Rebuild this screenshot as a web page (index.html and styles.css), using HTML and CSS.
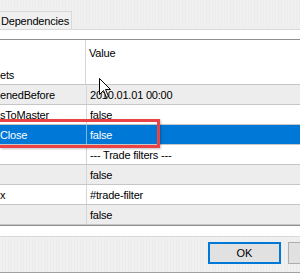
FILE: index.html
```html
<!DOCTYPE html>
<html lang="en">
<head>
    <meta charset="UTF-8">
    <title>Expert Properties</title>
    <link rel="stylesheet" href="styles.css">
</head>
<body>
    <div class="dialog">
        <div class="tabbar">
            <div class="tab">Dependencies</div>
        </div>
        <div class="panel">
            <div class="grid">
                <div class="row header">
                    <div class="name">ets</div>
                    <div class="value">Value</div>
                </div>
                <div class="row alt">
                    <div class="name">enedBefore</div>
                    <div class="value">2010.01.01 00:00</div>
                </div>
                <div class="row">
                    <div class="name">sToMaster</div>
                    <div class="value">false</div>
                </div>
                <div class="row selected">
                    <div class="name">Close</div>
                    <div class="value">false</div>
                </div>
                <div class="row">
                    <div class="name"></div>
                    <div class="value">--- Trade filters ---</div>
                </div>
                <div class="row alt">
                    <div class="name"></div>
                    <div class="value">false</div>
                </div>
                <div class="row">
                    <div class="name">x</div>
                    <div class="value">#trade-filter</div>
                </div>
                <div class="row alt">
                    <div class="name"></div>
                    <div class="value">false</div>
                </div>
            </div>
            <div class="highlight"></div>
            <svg class="cursor" width="13" height="20" viewBox="0 0 13 20">
                <path d="M0.5 0.5 L0.5 16.5 L4.5 12.5 L7.5 19.5 L9.5 18.5 L6.5 11.5 L11.5 11.5 Z" fill="#fff" stroke="#000" stroke-width="1"/>
            </svg>
        </div>
        <div class="footer">
            <button class="btn default">OK</button>
            <button class="btn"></button>
        </div>
    </div>
</body>
</html>
```

FILE: styles.css
```css
body {
    margin: 0;
    width: 300px;
    height: 273px;
    overflow: hidden;
    font-family: "Liberation Sans", Arial, sans-serif;
    font-size: 11px;
    letter-spacing: -0.2px;
    color: #000;
    background: #f0f0f0;
}
.dialog {
    display: flex;
    flex-direction: column;
    height: 273px;
    overflow: hidden;
}
.tabbar {
    height: 29px;
    display: flex;
    align-items: flex-end;
    border-bottom: 1px solid #d9d9d9;
    background: repeating-linear-gradient(90deg, #f0f0f0 0 2px, #ececec 2px 3px);
}
.tab {
    height: 18px;
    line-height: 18px;
    width: 72px;
    padding-left: 1px;
    box-sizing: border-box;
    border-top: 1px solid #d9d9d9;
    border-right: 1px solid #d9d9d9;
    background: #f0f0f0;
}
.panel {
    position: relative;
    background: #fff;
    padding-top: 9px;
    height: 197px;
    border-bottom: 1px solid #d9d9d9;
}
.grid {
    border-top: 1px solid #8e8f93;
    border-bottom: 1px solid #8e8f93;
}
.row {
    display: flex;
    height: 19px;
    border-bottom: 1px solid #c6c6c6;
    background: #fff;
}
.row.alt {
    background: #ededed;
}
.row.header {
    height: 44px;
}
.name {
    width: 86px;
    border-right: 1px solid #d6d6d6;
    display: flex;
    align-items: center;
    white-space: nowrap;
    overflow: hidden;
}
.value {
    flex: 1;
    display: flex;
    align-items: center;
    padding-left: 3px;
    white-space: nowrap;
}
.header .name {
    align-items: flex-end;
    padding-bottom: 3px;
    box-sizing: border-box;
}
.header .value {
    align-items: flex-start;
    padding-top: 7px;
}
.row.selected {
    background: #0078d7;
    color: #fff;
}
.row.selected .name {
    border-right-color: #7fb4e4;
}
.highlight {
    position: absolute;
    left: 0;
    top: 89px;
    width: 160px;
    height: 29px;
    box-sizing: border-box;
    border: 3px solid #ea4345;
    border-left: none;
    box-shadow: 1px 1px 2px rgba(0, 0, 0, 0.25);
}
.cursor {
    position: absolute;
    left: 99px;
    top: 48px;
}
.footer {
    flex: 1;
    display: flex;
    align-items: flex-start;
    gap: 7px;
    padding: 5px 0 0 208px;
    border-bottom: 1px solid #a0a0a0;
    background: repeating-linear-gradient(90deg, #f0f0f0 0 2px, #ebebeb 2px 3px);
}
.btn {
    width: 73px;
    height: 22px;
    flex-shrink: 0;
    font-family: "Liberation Sans", Arial, sans-serif;
    font-size: 11px;
    color: #000;
    background: #e1e1e1;
    border: 1px solid #adadad;
    padding: 0;
}
.btn.default {
    border: 2px solid #0078d7;
}
```
